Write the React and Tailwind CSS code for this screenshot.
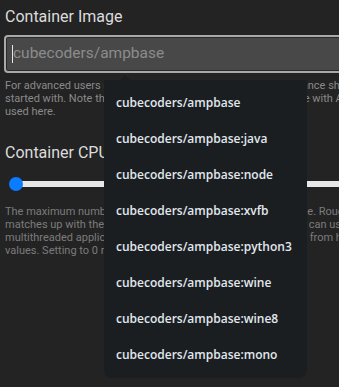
import React from "react";

const images = [
    "cubecoders/ampbase",
    "cubecoders/ampbase:java",
    "cubecoders/ampbase:node",
    "cubecoders/ampbase:xvfb",
    "cubecoders/ampbase:python3",
    "cubecoders/ampbase:wine",
    "cubecoders/ampbase:wine8",
    "cubecoders/ampbase:mono",
];

export default function App() {
    return (
        <div className="relative w-[339px] h-[387px] overflow-hidden bg-[#232323] font-['Roboto',sans-serif]">
            <div className="w-[440px] pl-[5px]">
                {/* Container Image */}
                <div className="pt-[6px] text-[16px] leading-[22px] text-[#dcdcdc]">
                    Container Image
                </div>
                <div className="mt-[7px] -ml-px h-[38px] rounded-[4px] border-2 border-[#a9a9a9] bg-[#484848] flex items-center pl-[6px] shadow-[inset_0_0_0_1px_#2a2a2a]">
                    <span className="w-px h-[18px] bg-[#e6e6e6]"></span>
                    <span className="text-[15.5px] text-[#8c8c8c]">cubecoders/ampbase</span>
                </div>
                <p className="mt-[6px] text-[11px] leading-[13px] text-[#8a8a8a] whitespace-nowrap">
                    For advanced users only. The container image which this instance should be
                    <br />
                    started with. Note that only Docker images designed for usage with AMP can be
                    <br />
                    used here.
                </p>

                {/* Container CPU */}
                <div className="mt-[24px] text-[16px] leading-[22px] text-[#dcdcdc]">
                    Container CPU
                </div>
                <div className="relative mt-[12px] h-[16px] flex items-center">
                    <div className="ml-[11px] flex-1 h-[6px] bg-[#e8e8e8] rounded-l-full"></div>
                    <div className="absolute left-[4px] top-[1px] w-[14px] h-[14px] rounded-full bg-[#0b7bff]"></div>
                </div>
                <p className="mt-[13px] text-[11px] leading-[13px] text-[#7c7c7c] whitespace-nowrap">
                    The maximum number of CPU cores that this instance may use. Roughly
                    <br />
                    matches up with the number of threads that your game server can use, so
                    <br />
                    multithreaded applications and games will now benefit greatly from higher
                    <br />
                    values. Setting to 0 removes the limit.
                </p>
            </div>

            {/* Dropdown */}
            <div className="absolute left-[104px] top-[80px] w-[203px] h-[298px] rounded-b-[8px] bg-[#1b1e21] pt-[5px]">
                <div className="absolute left-[16px] -top-[5px] w-0 h-0 border-x-[5px] border-x-transparent border-b-[5px] border-b-[#1b1e21]"></div>
                {images.map((img) => (
                    <div
                        key={img}
                        className="h-[36px] flex items-center pl-[12px] text-[12px] font-semibold text-[#e1e8ef] font-['Open_Sans',sans-serif]"
                    >
                        {img}
                    </div>
                ))}
            </div>
        </div>
    );
}
